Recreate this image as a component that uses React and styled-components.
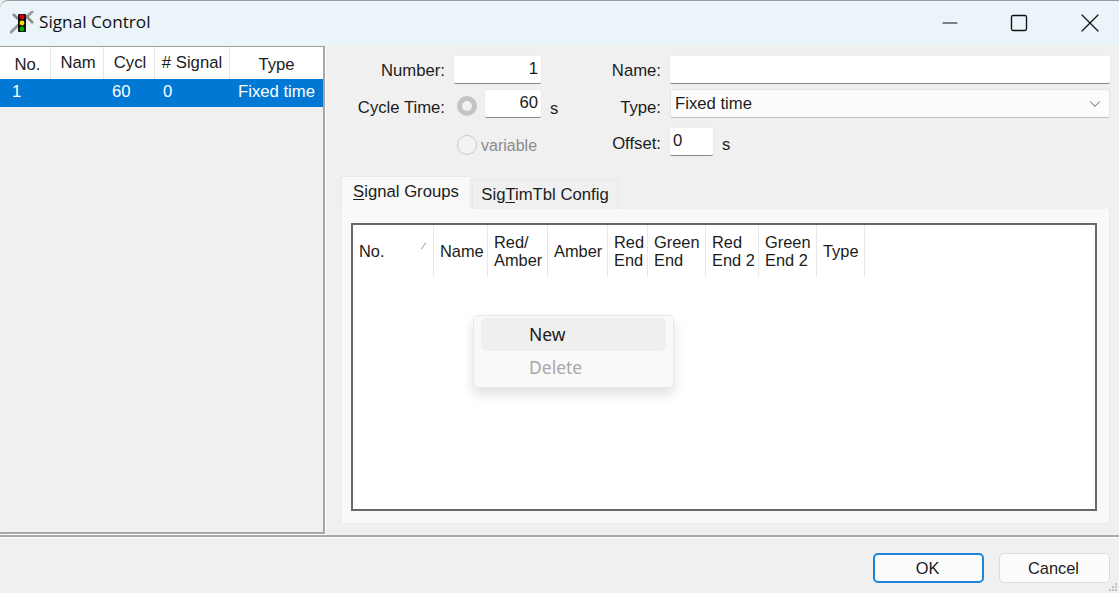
import styled, { createGlobalStyle } from "styled-components";
import { Minus, Square, X, ChevronDown } from "lucide-react";

const GlobalStyle = createGlobalStyle`
  html, body {
    margin: 0;
    padding: 0;
    background: #f0f0f0;
    overflow: hidden;
  }
  * {
    box-sizing: border-box;
  }
`;

const Window = styled.div`
  width: 1119px;
  height: 593px;
  display: flex;
  flex-direction: column;
  position: relative;
  background: #f0f0f0;
  color: #1c1c1c;
  font-family: "Liberation Sans", Arial, sans-serif;
  font-size: 16.7px;
`;

const TitleBar = styled.div`
  height: 46px;
  flex: none;
  display: flex;
  align-items: center;
  padding: 0 0 2px 10px;
  background: #ebf4f9;
  border-top: 1px solid #9c9c9c;
  border-top-left-radius: 8px;
`;

const AppTitle = styled.span`
  margin: 0 0 2px 5px;
  font-family: "Open Sans", "Noto Sans", sans-serif;
  font-size: 17.2px;
  color: #111;
`;

const WindowButtons = styled.div`
  margin-left: auto;
  display: flex;
  gap: 13px;
`;

const WindowButton = styled.div`
  width: 58px;
  height: 40px;
  display: flex;
  align-items: center;
  justify-content: center;
  color: #111;
  &:first-child {
    margin-right: -2px;
  }
`;

const Body = styled.div`
  height: 488px;
  flex: none;
  display: flex;
`;

const SidePanel = styled.div`
  width: 325px;
  flex: none;
  display: flex;
  flex-direction: column;
  background: #f0f0f0;
  border-top: 1px solid #a0a0a0;
  border-right: 2px solid #a6a6a6;
  border-bottom: 2px solid #a6a6a6;
  box-shadow: 1px 1px 0 #fff;
`;

const SideHeader = styled.div`
  height: 32px;
  display: flex;
  background: #fff;
`;

const SideHeaderCell = styled.div`
  width: ${(p) => p.$w}px;
  display: flex;
  align-items: center;
  justify-content: center;
  border-right: 1px solid #e6e6e6;
  white-space: nowrap;
  overflow: hidden;
  padding: ${(p) => p.$top || 0}px 0 ${(p) => p.$up || 0}px ${(p) => p.$left || 0}px;
  &:last-child {
    border-right: none;
  }
`;

const SideRow = styled.div`
  height: 28px;
  display: flex;
  align-items: center;
  padding-bottom: 2px;
  background: #0078d4;
  color: #fff;
`;

const SideCell = styled.div`
  width: ${(p) => p.$w}px;
  padding-left: ${(p) => p.$pad}px;
  white-space: nowrap;
`;

const Main = styled.div`
  flex: 1;
  display: flex;
  flex-direction: column;
  padding: 10px 9px 0 16px;
`;

const FormColumns = styled.div`
  display: grid;
  grid-template-columns: 200px 1fr;
  height: 120px;
  flex: none;
`;

const Stack = styled.div`
  display: flex;
  flex-direction: column;
`;

const FieldRow = styled.div`
  display: flex;
  align-items: center;
  height: ${(p) => p.$h}px;
  margin-bottom: ${(p) => p.$mb || 0}px;
`;

const Label = styled.label`
  width: ${(p) => p.$w}px;
  flex: none;
  text-align: right;
  margin: ${(p) => p.$down || 0}px 9px 0 0;
  white-space: nowrap;
`;

const NumberBox = styled.div`
  width: ${(p) => p.$w}px;
  height: 28px;
  flex: none;
  display: flex;
  align-items: center;
  justify-content: ${(p) => (p.$left ? "flex-start" : "flex-end")};
  padding: 0 3px 2px;
  background: #fff;
  border-bottom: 1px solid #8a8a8a;
  border-radius: 2px;
  box-shadow: 0 0 0 1px #ececec;
`;

const Radio = styled.span`
  width: 20px;
  height: 20px;
  flex: none;
  border-radius: 50%;
  margin: ${(p) => p.$down || 0}px ${(p) => p.$mr}px 0 ${(p) => p.$ml}px;
  background: ${(p) => (p.$checked ? "#c4c4c4" : "#f3f3f3")};
  border: ${(p) => (p.$checked ? "none" : "1.5px solid #c9c9c9")};
  display: flex;
  align-items: center;
  justify-content: center;
  &::after {
    content: "";
    display: ${(p) => (p.$checked ? "block" : "none")};
    width: 10px;
    height: 10px;
    border-radius: 50%;
    background: #f2f2f2;
  }
`;

const Unit = styled.span`
  margin: ${(p) => p.$down || 0}px 0 0 ${(p) => p.$ml}px;
`;

const DisabledText = styled.span`
  margin-top: 2px;
  font-size: 16px;
  color: #8b8b8b;
`;

const Select = styled.div`
  flex: 1;
  height: 29px;
  display: flex;
  align-items: center;
  justify-content: space-between;
  padding: 0 5px 0 4px;
  background: #fcfcfc;
  border: 1px solid #e4e4e4;
  border-bottom: 1px solid #c0c0c0;
  border-radius: 3px;
  color: #1c1c1c;
`;

const TextBox = styled.div`
  flex: 1;
  height: 28px;
  background: #fff;
  border-bottom: 1px solid #8a8a8a;
  border-radius: 2px;
  box-shadow: 0 0 0 1px #ececec;
`;

const TabStrip = styled.div`
  height: 33px;
  flex: none;
  display: flex;
  align-items: flex-end;
`;

const Tab = styled.div`
  height: ${(p) => (p.$active ? 33 : 29)}px;
  width: ${(p) => (p.$active ? 130 : 146)}px;
  display: flex;
  align-items: center;
  justify-content: center;
  padding-bottom: ${(p) => (p.$active ? 3 : 1)}px;
  background: ${(p) => (p.$active ? "#f9f9f9" : "#f0f0f0")};
  border: 1px solid #e8e8e8;
  border-bottom: none;
  margin-left: ${(p) => (p.$active ? 0 : 1)}px;
  white-space: nowrap;
  u {
    text-underline-offset: 2px;
  }
`;

const TabPanel = styled.div`
  width: 769px;
  height: 315px;
  flex: none;
  padding: 14px 12px 12px 9px;
  background: #f9f9f9;
  border: 1px solid #ececec;
  border-top: none;
`;

const GridBox = styled.div`
  height: 288px;
  background: #fff;
  border: 2px solid #696969;
`;

const GridHeader = styled.div`
  height: 52px;
  display: flex;
`;

const GridHeaderCell = styled.div`
  width: ${(p) => p.$w}px;
  flex: none;
  position: relative;
  display: flex;
  align-items: center;
  padding-left: 6px;
  line-height: 18px;
  font-size: 16.4px;
  border-right: 1px solid #e8e8e8;
  white-space: pre-line;
`;

const SortMark = styled.span`
  position: absolute;
  right: 9px;
  top: 17px;
  width: 1px;
  height: 8px;
  background: #a0a0a0;
  transform: rotate(35deg);
`;

const Footer = styled.div`
  flex: 1;
  display: flex;
  justify-content: flex-end;
  align-items: flex-start;
  gap: 15px;
  padding: 16px 9px 0 0;
  border-top: 2px solid #a8a8a8;
  box-shadow: inset 0 1px 0 #fff;
  margin-top: 1px;
  position: relative;
`;

const DialogButton = styled.button`
  width: 111px;
  height: 30px;
  padding: 0 2px 0 0;
  font: inherit;
  font-size: 16.4px;
  color: #1c1c1c;
  background: #fcfcfc;
  border: ${(p) => (p.$primary ? "2px solid #1f83d8" : "1px solid #dcdcdc")};
  border-radius: 5px;
`;

const Grip = styled.svg`
  position: absolute;
  right: 1px;
  bottom: 1px;
`;

const Menu = styled.div`
  position: absolute;
  left: 473px;
  top: 315px;
  width: 201px;
  height: 73px;
  padding: 2px 7px;
  background: #f9f9f9;
  border: 1px solid #e8e8e8;
  border-radius: 5px;
  box-shadow: 0 6px 12px rgba(0, 0, 0, 0.13);
  font-family: "Noto Sans", "Open Sans", sans-serif;
  font-size: 17.5px;
`;

const MenuItem = styled.div`
  height: 33px;
  display: flex;
  align-items: center;
  padding: 0 0 2px 48px;
  border-radius: 5px;
  background: ${(p) => (p.$hover ? "#efefef" : "transparent")};
  color: ${(p) => (p.$disabled ? "#a8a8a8" : "#1c1c1c")};
`;

function TrafficIcon() {
  return (
    <svg width="24" height="24" viewBox="0 0 24 24">
      <path d="M23 0 L0 22" stroke="#9a9a9a" strokeWidth="3" />
      <path d="M3 3 L8 8 M16 5 L23 12" stroke="#8a8a8a" strokeWidth="2.5" />
      <rect x="8" y="3" width="8" height="18" rx="1" fill="#111" />
      <circle cx="12" cy="6" r="2.4" fill="#e00000" />
      <circle cx="12" cy="12" r="2.4" fill="#f0e000" />
      <circle cx="12" cy="18" r="2.4" fill="#00b000" />
    </svg>
  );
}

const sideColumns = [
  { label: "No.", w: 51, top: 4, left: 5 },
  { label: "Nam", w: 53, up: 1, left: 2 },
  { label: "Cycl", w: 51, up: 1, left: 2 },
  { label: "# Signal", w: 75, up: 1 },
  { label: "Type", w: 93, top: 4 },
];

const gridColumns = [
  { label: "No.", w: 81, sort: true },
  { label: "Name", w: 54 },
  { label: "Red/\nAmber", w: 60 },
  { label: "Amber", w: 60 },
  { label: "Red\nEnd", w: 40 },
  { label: "Green\nEnd", w: 58 },
  { label: "Red\nEnd 2", w: 53 },
  { label: "Green\nEnd 2", w: 58 },
  { label: "Type", w: 48 },
];

export default function App() {
  return (
    <Window>
      <GlobalStyle />
      <TitleBar>
        <TrafficIcon />
        <AppTitle>Signal Control</AppTitle>
        <WindowButtons>
          <WindowButton>
            <Minus size={24} strokeWidth={1.1} />
          </WindowButton>
          <WindowButton>
            <Square size={20} strokeWidth={1.6} />
          </WindowButton>
          <WindowButton>
            <X size={32} strokeWidth={0.9} />
          </WindowButton>
        </WindowButtons>
      </TitleBar>

      <Body>
        <SidePanel>
          <SideHeader>
            {sideColumns.map((c) => (
              <SideHeaderCell key={c.label} $w={c.w} $up={c.up} $top={c.top} $left={c.left}>
                {c.label}
              </SideHeaderCell>
            ))}
          </SideHeader>
          <SideRow>
            <SideCell $w={51} $pad={12}>1</SideCell>
            <SideCell $w={53} $pad={0} />
            <SideCell $w={51} $pad={8}>60</SideCell>
            <SideCell $w={75} $pad={8}>0</SideCell>
            <SideCell $w={93} $pad={8}>Fixed time</SideCell>
          </SideRow>
        </SidePanel>

        <Main>
          <FormColumns>
            <Stack>
              <FieldRow $h={28} $mb={6}>
                <Label $w={104} $down={2}>Number:</Label>
                <NumberBox $w={87}>1</NumberBox>
              </FieldRow>
              <FieldRow $h={28} $mb={13}>
                <Label $w={104} $down={8}>Cycle Time:</Label>
                <Radio $checked $ml={3} $mr={8} $down={3} />
                <NumberBox $w={56}>60</NumberBox>
                <Unit $ml={9} $down={9}>s</Unit>
              </FieldRow>
              <FieldRow $h={28}>
                <Label $w={104} />
                <Radio $ml={3} $mr={4} />
                <DisabledText>variable</DisabledText>
              </FieldRow>
            </Stack>
            <Stack>
              <FieldRow $h={28} $mb={5}>
                <Label $w={120} $down={2}>Name:</Label>
                <TextBox />
              </FieldRow>
              <FieldRow $h={29} $mb={10}>
                <Label $w={120} $down={8}>Type:</Label>
                <Select>
                  Fixed time
                  <ChevronDown size={18} color="#777" strokeWidth={1.4} />
                </Select>
              </FieldRow>
              <FieldRow $h={28}>
                <Label $w={120} $down={4}>Offset:</Label>
                <NumberBox $w={43} $left>0</NumberBox>
                <Unit $ml={9} $down={6}>s</Unit>
              </FieldRow>
            </Stack>
          </FormColumns>

          <TabStrip>
            <Tab $active><span><u>S</u>ignal Groups</span></Tab>
            <Tab><span>Sig<u>T</u>imTbl Config</span></Tab>
          </TabStrip>

          <TabPanel>
            <GridBox>
              <GridHeader>
                {gridColumns.map((c) => (
                  <GridHeaderCell key={c.label} $w={c.w}>
                    {c.label}
                    {c.sort && <SortMark />}
                  </GridHeaderCell>
                ))}
              </GridHeader>
            </GridBox>
          </TabPanel>
        </Main>
      </Body>

      <Footer>
        <DialogButton $primary>OK</DialogButton>
        <DialogButton>Cancel</DialogButton>
        <Grip width="10" height="10" viewBox="0 0 10 10">
          <rect x="7" y="1" width="2" height="2" fill="#c0c0c0" />
          <rect x="4" y="4" width="2" height="2" fill="#c0c0c0" />
          <rect x="7" y="4" width="2" height="2" fill="#c0c0c0" />
          <rect x="1" y="7" width="2" height="2" fill="#c0c0c0" />
          <rect x="4" y="7" width="2" height="2" fill="#c0c0c0" />
          <rect x="7" y="7" width="2" height="2" fill="#c0c0c0" />
        </Grip>
      </Footer>

      <Menu>
        <MenuItem $hover>New</MenuItem>
        <MenuItem $disabled>Delete</MenuItem>
      </Menu>
    </Window>
  );
}
